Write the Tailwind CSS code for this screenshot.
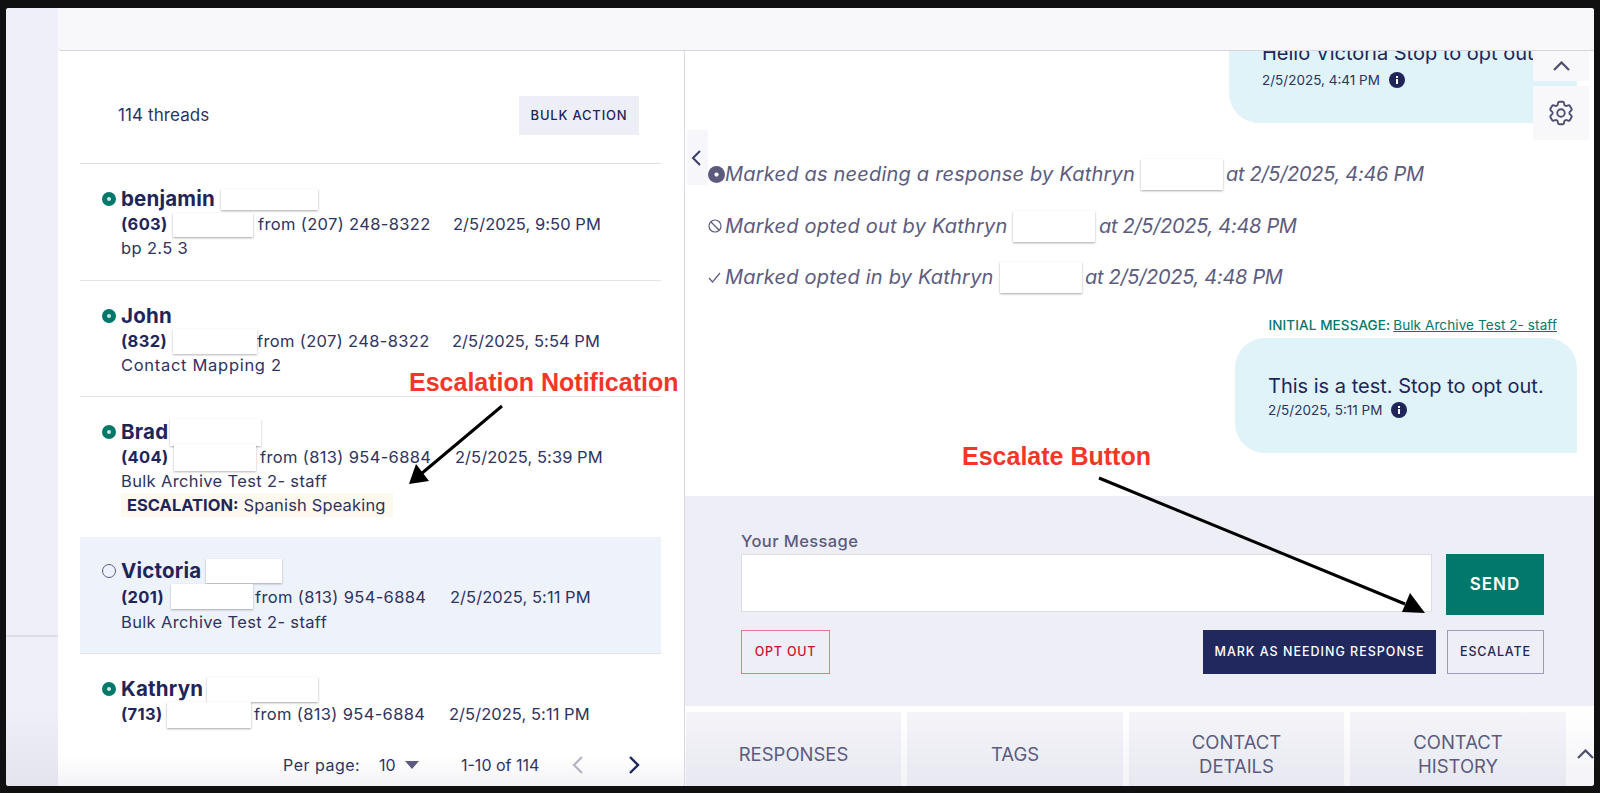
<!DOCTYPE html>
<html lang="en">
<head>
    <meta charset="UTF-8">
    <title>Threads</title>
    <script src="https://cdn.jsdelivr.net/npm/@tailwindcss/browser@4"></script>
</head>
<body class="bg-[#101010] overflow-hidden font-['Inter',sans-serif]">
    <div class="relative w-[1600px] h-[793px] pt-[8px] pl-[6px] pr-[6px] pb-[7px]">
        <div class="flex h-full rounded-[3px] overflow-hidden bg-white text-[#1f2559]">

            <!-- Sidebar -->
            <div class="w-[52px] shrink-0 flex flex-col bg-gradient-to-b from-[#efeff8] from-90% to-[#e4e4ec]">
                <div class="h-[629px] border-b-2 border-[#dcdce4]"></div>
            </div>

            <!-- Main -->
            <div class="flex-1 flex flex-col min-w-0">
                <div class="h-[43px] shrink-0 bg-[#f8f8fb] border-b border-[#d5d5dc] rounded-bl-[4px]"></div>

                <div class="flex flex-1 min-h-0">
                    <!-- Thread list -->
                    <div class="relative w-[627px] shrink-0 border-r border-[#d9d9e2] overflow-hidden">
                        <div class="h-[112px] pt-[17px] flex items-center justify-between pl-[60px] pr-[45px]">
                            <span class="text-[17px] tracking-[0.1px] text-[#2f3360]">114 threads</span>
                            <button class="w-[120px] h-[39px] bg-[#eeeef6] text-[13px] font-medium tracking-[0.8px] text-[#1f2559]">BULK ACTION</button>
                        </div>

                        <div class="ml-[22px] mr-[23px] border-t border-[#dedee6] text-[16.5px] tracking-[0.35px] text-[#2f3360]">
                            <!-- Row 1 -->
                            <div class="h-[117px] border-b border-[#e3e3ea] pt-[23px] pl-[22px] flex">
                                <span class="mt-[5px] w-[14px] h-[14px] rounded-full border-[5px] border-[#00786a] bg-[#cfe8e4] shrink-0"></span>
                                <div class="ml-[5px]">
                                    <div class="h-[25px] flex items-center"><span class="w-[100px] text-[20.5px] font-bold tracking-[0.2px] text-[#1f2559]">benjamin</span><span class="w-[97px] h-[21px] bg-white shadow-[0_1px_2px_rgba(0,0,0,0.35)]"></span></div>
                                    <div class="h-[25px] flex items-center"><span class="w-[52px] font-bold text-[#1f2559]">(603)</span><span class="w-[80px] h-[24px] bg-white shadow-[0_1px_2px_rgba(0,0,0,0.35)]"></span><span class="ml-[5px] w-[195px]">from (207) 248-8322</span><span class="tracking-[0.05px]">2/5/2025, 9:50 PM</span></div>
                                    <div class="h-[22px] flex items-center">bp 2.5 3</div>
                                </div>
                            </div>
                            <!-- Row 2 -->
                            <div class="h-[116px] border-b border-[#e3e3ea] pt-[23px] pl-[22px] flex">
                                <span class="mt-[5px] w-[14px] h-[14px] rounded-full border-[5px] border-[#00786a] bg-[#cfe8e4] shrink-0"></span>
                                <div class="ml-[5px]">
                                    <div class="h-[25px] flex items-center"><span class="w-[52px] text-[20.5px] font-bold tracking-[0.2px] text-[#1f2559]">John</span><span class="w-[85px] h-[25px] bg-white"></span></div>
                                    <div class="h-[25px] flex items-center"><span class="w-[52px] font-bold text-[#1f2559]">(832)</span><span class="w-[84px] h-[25px] bg-white shadow-[0_1px_2px_rgba(0,0,0,0.3)]"></span><span class="w-[195px]">from (207) 248-8322</span><span class="tracking-[0.05px]">2/5/2025, 5:54 PM</span></div>
                                    <div class="h-[22px] flex items-center tracking-[0.7px]">Contact Mapping 2</div>
                                </div>
                            </div>
                            <!-- Row 3 -->
                            <div class="h-[140px] pt-[23px] pl-[22px] flex">
                                <span class="mt-[5px] w-[14px] h-[14px] rounded-full border-[5px] border-[#00786a] bg-[#cfe8e4] shrink-0"></span>
                                <div class="ml-[5px]">
                                    <div class="h-[25px] flex items-center"><span class="w-[49px] text-[20.5px] font-bold tracking-[0.2px] text-[#1f2559]">Brad</span><span class="w-[91px] h-[27px] bg-white shadow-[0_1px_2px_rgba(0,0,0,0.3)]"></span></div>
                                    <div class="h-[25px] flex items-center"><span class="w-[53px] font-bold text-[#1f2559]">(404)</span><span class="w-[82px] h-[27px] bg-white shadow-[0_1px_2px_rgba(0,0,0,0.3)]"></span><span class="ml-[4px] w-[195px]">from (813) 954-6884</span><span class="tracking-[0.05px]">2/5/2025, 5:39 PM</span></div>
                                    <div class="h-[23px] flex items-center">Bulk Archive Test 2- staff</div>
                                    <div class="h-[24px] flex items-center w-[272px] pl-[6px] bg-[#fef9ef] tracking-[0.15px]"><span class="font-bold text-[#1f2559] mr-[5px] tracking-[0px]">ESCALATION:</span>Spanish Speaking</div>
                                </div>
                            </div>
                            <!-- Row 4 (selected) -->
                            <div class="h-[117px] bg-[#edf2fb] border-b border-[#e3e3ea] pt-[22px] pl-[22px] flex">
                                <span class="mt-[5px] w-[14px] h-[14px] rounded-full border-[1.5px] border-[#5c5b7e] shrink-0"></span>
                                <div class="ml-[5px]">
                                    <div class="h-[25px] flex items-center"><span class="w-[85px] text-[20.5px] font-bold tracking-[0.2px] text-[#1f2559]">Victoria</span><span class="w-[76px] h-[24px] bg-white shadow-[0_1px_2px_rgba(0,0,0,0.3)] -mt-[2px]"></span></div>
                                    <div class="h-[27px] flex items-center"><span class="w-[50px] font-bold text-[#1f2559]">(201)</span><span class="w-[82px] h-[25px] bg-white shadow-[0_1px_2px_rgba(0,0,0,0.3)] -mt-[3px]"></span><span class="ml-[2px] w-[195px]">from (813) 954-6884</span><span class="tracking-[0.05px]">2/5/2025, 5:11 PM</span></div>
                                    <div class="h-[22px] flex items-center">Bulk Archive Test 2- staff</div>
                                </div>
                            </div>
                            <!-- Row 5 -->
                            <div class="h-[100px] pt-[23px] pl-[22px] flex">
                                <span class="mt-[5px] w-[14px] h-[14px] rounded-full border-[5px] border-[#00786a] bg-[#cfe8e4] shrink-0"></span>
                                <div class="ml-[5px]">
                                    <div class="h-[24px] flex items-center"><span class="w-[86px] text-[20.5px] font-bold tracking-[0.2px] text-[#1f2559]">Kathryn</span><span class="w-[111px] h-[25px] bg-white shadow-[0_1px_2px_rgba(0,0,0,0.35)]"></span></div>
                                    <div class="h-[27px] flex items-center"><span class="w-[46px] font-bold text-[#1f2559]">(713)</span><span class="w-[84px] h-[26px] bg-white shadow-[0_1px_2px_rgba(0,0,0,0.35)]"></span><span class="ml-[3px] w-[195px]">from (813) 954-6884</span><span class="tracking-[0.05px]">2/5/2025, 5:11 PM</span></div>
                                </div>
                            </div>
                        </div>

                        <!-- Pagination -->
                        <div class="absolute bottom-0 left-0 right-0 h-[50px] pt-[8px] bg-gradient-to-b from-white from-40% to-[#f3f3f6] flex items-center text-[16px] text-[#2f3360]">
                            <span class="ml-[225px] w-[96px] tracking-[0.5px]">Per page:</span>
                            <span class="w-[26px]">10</span>
                            <svg class="w-[14px] h-[8px]" viewBox="0 0 14 8"><path d="M0 0h14L7 8z" fill="#5c5b7e"/></svg>
                            <span class="ml-[42px] w-[111px]">1-10 of 114</span>
                            <svg class="w-[12px] h-[20px]" viewBox="0 0 12 20" fill="none" stroke="#b4b4c4" stroke-width="2.2"><path d="M10 2 2 10l8 8"/></svg>
                            <svg class="ml-[44px] w-[12px] h-[20px]" viewBox="0 0 12 20" fill="none" stroke="#1f2559" stroke-width="2.4"><path d="m2 2 8 8-8 8"/></svg>
                        </div>
                    </div>

                    <!-- Conversation -->
                    <div class="flex-1 flex flex-col min-w-0">
                        <div class="relative h-[445px] shrink-0 overflow-hidden">
                            <!-- Collapse tab -->
                            <div class="absolute left-[2px] top-[79px] w-[21px] h-[55px] bg-[#f7f7fb] flex items-center pl-[4px]">
                                <svg class="w-[11px] h-[16px]" viewBox="0 0 11 16" fill="none" stroke="#3a3d66" stroke-width="2"><path d="M9 1 2 8l7 7"/></svg>
                            </div>
                            <!-- Up + settings -->
                            <div class="absolute right-[5px] top-0 w-[56px] h-[30px] bg-[#f8f8fb] flex items-center justify-center">
                                <svg class="w-[17px] h-[10px]" viewBox="0 0 17 10" fill="none" stroke="#4d4d70" stroke-width="2.2"><path d="m1 9 7.5-7.5L16 9"/></svg>
                            </div>
                            <div class="absolute right-[5px] top-[35px] w-[56px] h-[54px] bg-[#f8f8fb] flex items-center justify-center">
                                <svg class="w-[30px] h-[30px]" viewBox="0 0 24 24" fill="none" stroke="#4d4d70" stroke-width="1.5"><path stroke-linejoin="round" d="M9.594 3.94c.09-.542.56-.94 1.11-.94h2.593c.55 0 1.02.398 1.11.94l.213 1.281c.063.374.313.686.645.87.074.04.147.083.22.127.325.196.72.257 1.075.124l1.217-.456a1.125 1.125 0 0 1 1.37.49l1.296 2.247a1.125 1.125 0 0 1-.26 1.431l-1.003.827c-.293.241-.438.613-.43.992a7.723 7.723 0 0 1 0 .255c-.008.378.137.75.43.991l1.004.827c.424.35.534.955.26 1.43l-1.298 2.247a1.125 1.125 0 0 1-1.369.491l-1.217-.456c-.355-.133-.75-.072-1.076.124a6.47 6.47 0 0 1-.22.128c-.331.183-.581.495-.644.869l-.213 1.281c-.09.543-.56.94-1.11.94h-2.594c-.55 0-1.019-.398-1.11-.94l-.213-1.281c-.062-.374-.312-.686-.644-.87a6.52 6.52 0 0 1-.22-.127c-.325-.196-.72-.257-1.076-.124l-1.217.456a1.125 1.125 0 0 1-1.369-.49l-1.297-2.247a1.125 1.125 0 0 1 .26-1.431l1.004-.827c.292-.24.437-.613.43-.991a6.932 6.932 0 0 1 0-.255c.007-.38-.138-.751-.43-.992l-1.004-.827a1.125 1.125 0 0 1-.26-1.43l1.297-2.247a1.125 1.125 0 0 1 1.37-.491l1.216.456c.356.133.751.072 1.076-.124.072-.044.146-.086.22-.128.332-.183.582-.495.644-.869l.214-1.28Z"/><circle cx="12" cy="12" r="3"/></svg>
                            </div>

                            <!-- Earlier bubble, cut off by the top bar -->
                            <div class="ml-auto mr-[17px] w-[348px] h-[72px] rounded-bl-[30px] bg-[#dff3f8] pl-[33px] overflow-hidden">
                                <div class="-mt-[10px] h-[24px] flex items-center text-[20px] whitespace-nowrap">Hello Victoria Stop to opt out.</div>
                                <div class="mt-[4px] h-[22px] flex items-center text-[13.5px] text-[#2f3360]">2/5/2025, 4:41 PM<svg class="ml-[9px] w-[16px] h-[16px]" viewBox="0 0 16 16"><circle cx="8" cy="8" r="8" fill="#1f2559"/><path d="M7 7h2v5H7zM7 4h2v2H7z" fill="#fff"/></svg></div>
                            </div>

                            <!-- Status events -->
                            <div class="mt-[25px] pl-[23px] text-[20px] italic text-[#5c5b7e] tracking-[0.2px]">
                                <div class="h-[52px] flex items-center whitespace-nowrap">
                                    <span class="w-[17px] shrink-0"><svg class="w-[17px] h-[17px]" viewBox="0 0 16 16"><circle cx="8" cy="8" r="8" fill="#5c5b7e"/><circle cx="8" cy="8" r="2" fill="#fff"/></svg></span>
                                    <span class="w-[416px] shrink-0">Marked as needing a response by Kathryn</span><span class="w-[82px] h-[31px] shrink-0 bg-white shadow-[0_1px_2px_rgba(0,0,0,0.35)]"></span><span class="ml-[3px] tracking-[-0.3px]">at 2/5/2025, 4:46 PM</span>
                                </div>
                                <div class="h-[52px] flex items-center whitespace-nowrap">
                                    <span class="w-[17px] shrink-0"><svg class="w-[14px] h-[14px]" viewBox="0 0 14 14" fill="none" stroke="#5c5b7e" stroke-width="1.2"><circle cx="7" cy="7" r="6"/><path d="m3 3 8 8"/></svg></span>
                                    <span class="w-[288px] shrink-0">Marked opted out by Kathryn</span><span class="w-[82px] h-[31px] shrink-0 bg-white shadow-[0_1px_2px_rgba(0,0,0,0.35)]"></span><span class="ml-[4px] tracking-[-0.3px]">at 2/5/2025, 4:48 PM</span>
                                </div>
                                <div class="h-[50px] flex items-center whitespace-nowrap">
                                    <span class="w-[17px] shrink-0"><svg class="w-[13px] h-[11px]" viewBox="0 0 13 11" fill="none" stroke="#5c5b7e" stroke-width="1.2"><path d="m1 6 3.5 4L12 1"/></svg></span>
                                    <span class="w-[275px] shrink-0">Marked opted in by Kathryn</span><span class="w-[82px] h-[31px] shrink-0 bg-white shadow-[0_1px_2px_rgba(0,0,0,0.35)]"></span><span class="ml-[3px] tracking-[-0.3px]">at 2/5/2025, 4:48 PM</span>
                                </div>
                            </div>

                            <!-- Last message -->
                            <div class="mt-[15px] mr-[37px] h-[17px] flex items-center justify-end text-[13.5px] text-[#00786a] tracking-[0.1px]"><span class="font-medium mr-[3px]">INITIAL MESSAGE:</span><span class="underline">Bulk Archive Test 2- staff</span></div>
                            <div class="ml-auto mr-[17px] mt-[4px] w-[342px] h-[115px] rounded-tl-[30px] rounded-tr-[30px] rounded-bl-[30px] bg-[#dff3f8] pl-[33px] pt-[34px]">
                                <div class="h-[27px] flex items-center text-[20px] whitespace-nowrap">This is a test. Stop to opt out.</div>
                                <div class="h-[22px] flex items-center text-[13.5px] text-[#2f3360]">2/5/2025, 5:11 PM<svg class="ml-[9px] w-[16px] h-[16px]" viewBox="0 0 16 16"><circle cx="8" cy="8" r="8" fill="#1f2559"/><path d="M7 7h2v5H7zM7 4h2v2H7z" fill="#fff"/></svg></div>
                            </div>
                        </div>

                        <!-- Composer -->
                        <div class="h-[210px] shrink-0 bg-[#eeeef6] pl-[56px] pr-[50px] pt-[35px]">
                            <div class="h-[20px] flex items-center text-[16.5px] font-medium tracking-[0.4px] text-[#5c5b7e]">Your Message</div>
                            <div class="mt-[3px] flex gap-[14px]">
                                <div class="flex-1 h-[58px] bg-white border border-[#dcdce4]"></div>
                                <button class="w-[98px] h-[61px] bg-[#00796b] text-white text-[17px] font-semibold tracking-[1px]">SEND</button>
                            </div>
                            <div class="mt-[15px] flex items-center">
                                <button class="w-[89px] h-[44px] border border-[#e27d87] text-[#c8102e] text-[12.5px] font-medium tracking-[0.8px]">OPT OUT</button>
                                <button class="ml-auto w-[233px] h-[44px] bg-[#20285e] text-white text-[12.5px] font-medium tracking-[1px]">MARK AS NEEDING RESPONSE</button>
                                <button class="ml-[11px] w-[97px] h-[44px] border border-[#9a9ac0] text-[#1f2559] text-[12.5px] font-medium tracking-[0.9px]">ESCALATE</button>
                            </div>
                        </div>

                        <!-- Tabs -->
                        <div class="flex-1 mt-[6px] flex gap-[6px] pl-[1px] text-[18.5px] leading-[24px] text-[#5c5b7e] text-center bg-gradient-to-b from-white to-[#f3f3f8]">
                            <div class="w-[215px] pt-[10px] flex items-center justify-center bg-gradient-to-b from-[#f4f4f9] to-[#e8e8f1]">RESPONSES</div>
                            <div class="w-[216px] pt-[10px] flex items-center justify-center bg-gradient-to-b from-[#f4f4f9] to-[#e8e8f1]">TAGS</div>
                            <div class="w-[215px] pt-[10px] flex items-center justify-center bg-gradient-to-b from-[#f4f4f9] to-[#e8e8f1]">CONTACT<br>DETAILS</div>
                            <div class="w-[216px] pt-[10px] flex items-center justify-center bg-gradient-to-b from-[#f4f4f9] to-[#e8e8f1]">CONTACT<br>HISTORY</div>
                            <div class="flex-1 pt-[10px] flex items-center justify-end overflow-hidden">
                                <svg class="w-[17px] h-[10px] shrink-0" viewBox="0 0 17 10" fill="none" stroke="#4d4d70" stroke-width="2.2"><path d="m1 9 7.5-7.5L16 9"/></svg>
                            </div>
                        </div>
                    </div>
                </div>
            </div>
        </div>

        <!-- Annotations drawn over the screenshot -->
        <div class="absolute left-[409px] top-[367px] text-[25px] leading-[30px] font-bold text-[#f5352a] whitespace-nowrap font-['Liberation_Sans',sans-serif]">Escalation Notification</div>
        <div class="absolute left-[962px] top-[441px] text-[25px] leading-[30px] font-bold text-[#f5352a] whitespace-nowrap font-['Liberation_Sans',sans-serif]">Escalate Button</div>
        <svg class="absolute left-0 top-0 w-[1600px] h-[793px] pointer-events-none" viewBox="0 0 1600 793">
            <path d="M502 406 421 474" stroke="#000" stroke-width="3" fill="none"/>
            <path d="M409 484 416 464 429 481z" fill="#000"/>
            <path d="M1099 478 1405 604" stroke="#000" stroke-width="3" fill="none"/>
            <path d="M1425 613 1402 612 1410 593z" fill="#000"/>
        </svg>
    </div>
</body>
</html>
